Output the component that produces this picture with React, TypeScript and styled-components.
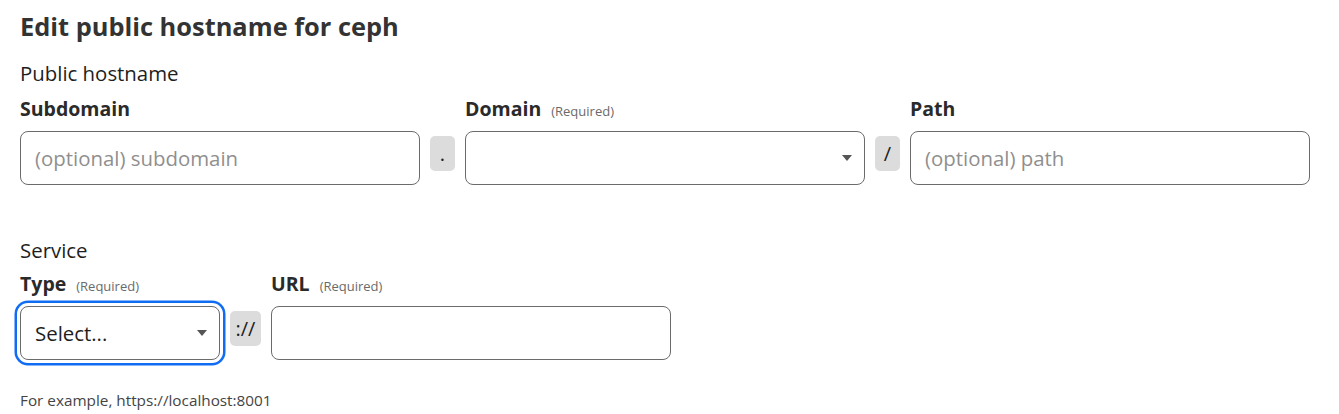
import React from "react";
import styled, { createGlobalStyle } from "styled-components";

const Global = createGlobalStyle`
  html, body { margin: 0; padding: 0; background: #fff; }
  body { font-family: "Open Sans", "Noto Sans", sans-serif; color: #222; }
  * { box-sizing: border-box; }
`;

const Page = styled.div`
  padding: 9px 20px 0 20px;
  width: 1339px;
  height: 414px;
  overflow: hidden;
`;

const Title = styled.h2`
  margin: 0;
  font-size: 25.4px;
  line-height: 34px;
  font-weight: 700;
  color: #333;
`;

const SectionLabel = styled.div<{ $mt: number }>`
  font-size: 20.4px;
  line-height: 26px;
  color: #1e1e1e;
  margin-top: ${(p) => p.$mt}px;
`;

const Grid = styled.div<{ $cols: string; $mt: number }>`
  display: grid;
  grid-template-columns: ${(p) => p.$cols};
  column-gap: 10px;
  row-gap: 8px;
  margin-top: ${(p) => p.$mt}px;
`;

const FieldLabel = styled.div`
  display: flex;
  align-items: baseline;
  gap: 10px;
  font-size: 19.5px;
  line-height: 24px;
  font-weight: 700;
  color: #2a2a2a;
  white-space: nowrap;
`;

const Req = styled.span`
  font-size: 13px;
  font-weight: 400;
  color: #6a6a6a;
`;

const Box = styled.div<{ $focus?: boolean }>`
  position: relative;
  height: 54px;
  border: 1px solid #6b6b6b;
  border-radius: 8px;
  display: flex;
  align-items: center;
  padding: 0 14px;
  font-size: 20.4px;
  color: #1e1e1e;
  background: #fff;
  ${(p) => (p.$focus ? `box-shadow: 0 0 0 3px #fff, 0 0 0 5.5px #106cf2;` : "")}
`;

const Placeholder = styled.span`
  color: #8f8f8f;
`;

const Caret = styled.span`
  position: absolute;
  right: 12px;
  top: 50%;
  margin-top: -3px;
  width: 0;
  height: 0;
  border-left: 5.5px solid transparent;
  border-right: 5.5px solid transparent;
  border-top: 6px solid #555;
`;

const Sep = styled.div`
  align-self: start;
  margin-top: 5px;
  height: 35px;
  border-radius: 5px;
  background: #dcdcdc;
  display: flex;
  align-items: center;
  justify-content: center;
  font-size: 20px;
  color: #1e1e1e;
`;

const Hint = styled.div`
  margin-top: 30px;
  font-size: 15.3px;
  line-height: 20px;
  color: #444;
`;

const Spacer = styled.div``;

export default function App() {
  return (
    <>
      <Global />
      <Page>
        <Title>Edit public hostname for ceph</Title>
        <SectionLabel $mt={17}>Public hostname</SectionLabel>
        <Grid $cols="400px 25px 400px 25px 400px" $mt={11}>
          <FieldLabel>Subdomain</FieldLabel>
          <Spacer />
          <FieldLabel>
            Domain<Req>(Required)</Req>
          </FieldLabel>
          <Spacer />
          <FieldLabel>Path</FieldLabel>
          <Box>
            <Placeholder>(optional) subdomain</Placeholder>
          </Box>
          <Sep>.</Sep>
          <Box>
            <Caret />
          </Box>
          <Sep>/</Sep>
          <Box>
            <Placeholder>(optional) path</Placeholder>
          </Box>
        </Grid>
        <SectionLabel $mt={52}>Service</SectionLabel>
        <Grid $cols="200px 31px 400px" $mt={9}>
          <FieldLabel>
            Type<Req>(Required)</Req>
          </FieldLabel>
          <Spacer />
          <FieldLabel>
            URL<Req>(Required)</Req>
          </FieldLabel>
          <Box $focus>
            Select...
            <Caret />
          </Box>
          <Sep>://</Sep>
          <Box />
        </Grid>
        <Hint>For example, https://localhost:8001</Hint>
      </Page>
    </>
  );
}
